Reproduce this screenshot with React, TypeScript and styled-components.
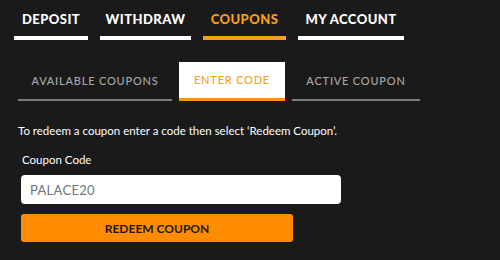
import React from "react";
import styled, { createGlobalStyle } from "styled-components";

const Global = createGlobalStyle`
  html, body { margin: 0; padding: 0; background: #1a1a1a; }
  body { font-family: "Lato", "Open Sans", sans-serif; }
`;

const Page = styled.div`
  width: 500px;
  height: 260px;
  background: #1a1a1a;
  box-sizing: border-box;
  padding: 0 0 0 14px;
`;

const TopNav = styled.nav`
  display: flex;
  gap: 12px;
  padding-top: 12px;
`;

const TopTab = styled.div<{ $active?: boolean; $w: number }>`
  width: ${(p) => p.$w}px;
  display: flex;
  flex-direction: column;
  align-items: center;
  font-weight: 900;
  font-size: 13px;
  letter-spacing: 0.45px;
  color: ${(p) => (p.$active ? "#f99d1c" : "#ffffff")};
  line-height: 15px;
  &::after {
    content: "";
    display: block;
    margin-top: 9px;
    width: 100%;
    height: 4px;
    background: ${(p) => (p.$active ? "#f99d1c" : "#ffffff")};
  }
`;

const SubNav = styled.div`
  display: flex;
  align-items: flex-end;
  margin-top: 22px;
  margin-left: 4px;
  gap: 7px;
`;

const SubTab = styled.div<{ $active?: boolean; $w: number }>`
  width: ${(p) => p.$w}px;
  height: ${(p) => (p.$active ? 39 : 38)}px;
  box-sizing: border-box;
  display: flex;
  align-items: center;
  justify-content: center;
  font-size: 11px;
  letter-spacing: 0.8px;
  font-weight: 500;
  padding-bottom: 2px;
  color: ${(p) => (p.$active ? "#f99d1c" : "#a9a9a9")};
  background: ${(p) => (p.$active ? "#ffffff" : "transparent")};
  border-bottom: ${(p) => (p.$active ? 3 : 2)}px solid
    ${(p) => (p.$active ? "#f7921e" : "#7a7a7a")};
`;

const Body = styled.div`
  padding: 22px 0 0 4px;
`;

const Info = styled.p`
  margin: 0;
  font-size: 11.5px;
  color: #ffffff;
  line-height: 16px;
`;

const Label = styled.div`
  margin: 13px 0 0 4px;
  font-size: 11.5px;
  color: #ffffff;
  line-height: 16px;
`;

const Input = styled.div`
  margin: 7px 0 0 3px;
  width: 320px;
  height: 29px;
  box-sizing: border-box;
  background: #ffffff;
  border-radius: 4px;
  display: flex;
  align-items: center;
  padding-left: 9px;
  font-size: 13px;
  color: #6c757d;
  letter-spacing: 0.3px;
`;

const Button = styled.button`
  margin: 10px 0 0 3px;
  width: 272px;
  height: 28px;
  border: none;
  border-radius: 3px;
  background: #ff8c00;
  color: #1a1a1a;
  font-family: "Lato", sans-serif;
  font-weight: 700;
  font-size: 12px;
  letter-spacing: 0;
  display: flex;
  align-items: center;
  justify-content: center;
  padding: 0;
`;

export default function App() {
  return (
    <Page>
      <Global />
      <TopNav>
        <TopTab $w={74}>DEPOSIT</TopTab>
        <TopTab $w={91}>WITHDRAW</TopTab>
        <TopTab $w={83} $active>COUPONS</TopTab>
        <TopTab $w={106}>MY ACCOUNT</TopTab>
      </TopNav>
      <SubNav>
        <SubTab $w={154}>AVAILABLE COUPONS</SubTab>
        <SubTab $w={106} $active>ENTER CODE</SubTab>
        <SubTab $w={128}>ACTIVE COUPON</SubTab>
      </SubNav>
      <Body>
        <Info>To redeem a coupon enter a code then select ‘Redeem Coupon’.</Info>
        <Label>Coupon Code</Label>
        <Input>PALACE20</Input>
        <Button>REDEEM COUPON</Button>
      </Body>
    </Page>
  );
}
